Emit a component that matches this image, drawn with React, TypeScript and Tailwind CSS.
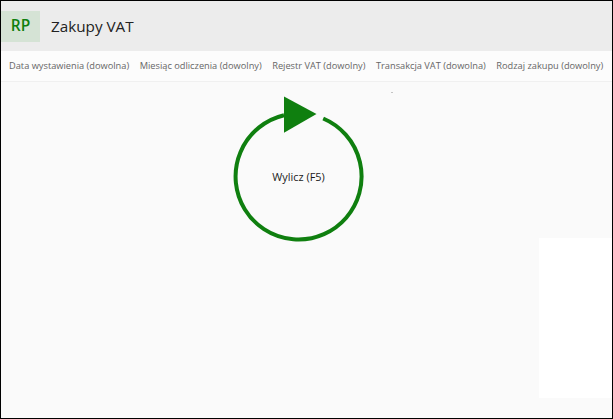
const filtry = [
  "Data wystawienia (dowolna)",
  "Miesiąc odliczenia (dowolny)",
  "Rejestr VAT (dowolny)",
  "Transakcja VAT (dowolna)",
  "Rodzaj zakupu (dowolny)",
];

export default function App() {
  return (
    <div className="flex h-[419px] w-[613px] flex-col overflow-hidden border border-black bg-[#fafafa] font-['Open_Sans','Noto_Sans',sans-serif]">
      <header className="flex h-[50px] shrink-0 items-center bg-[#ececec]">
        <div className="flex h-[31px] w-[39px] items-center justify-center bg-[#d5e3d5] text-[15.5px] font-semibold text-[#0f7f0f]">
          RP
        </div>
        <h1 className="ml-[11px] text-[15.25px] text-[#222222]">Zakupy VAT</h1>
      </header>

      <nav className="flex h-[31px] shrink-0 items-center gap-[10.5px] border-b border-[#f0f0f0] bg-[#fcfcfc] pl-[8px] text-[9.25px] whitespace-nowrap text-[#666666]">
        {filtry.map((f) => (
          <span key={f}>{f}</span>
        ))}
      </nav>

      <main className="relative flex min-h-0 flex-1">
        <button className="relative mt-[14px] ml-[228px] h-[146px] w-[139px] shrink-0 self-start">
          <svg width="139" height="146" viewBox="0 0 139 146" fill="none">
            <path d="M94.2 22.5 A63 63 0 1 1 55 19.2" stroke="#0f7f0f" strokeWidth="4" />
            <polygon points="55,0.5 55,36.8 87.5,18" fill="#0f7f0f" />
          </svg>
          <span className="absolute top-[74px] left-0 w-full text-center text-[10.9px] leading-[14px] text-[#1a1a1a]">
            Wylicz (F5)
          </span>
        </button>
        <span className="absolute top-[10px] left-[390px] h-px w-[2px] bg-[#c4c4c4]" />
        <div className="mt-[156px] mb-[20px] ml-auto w-[73px] bg-white" />
      </main>
    </div>
  );
}
